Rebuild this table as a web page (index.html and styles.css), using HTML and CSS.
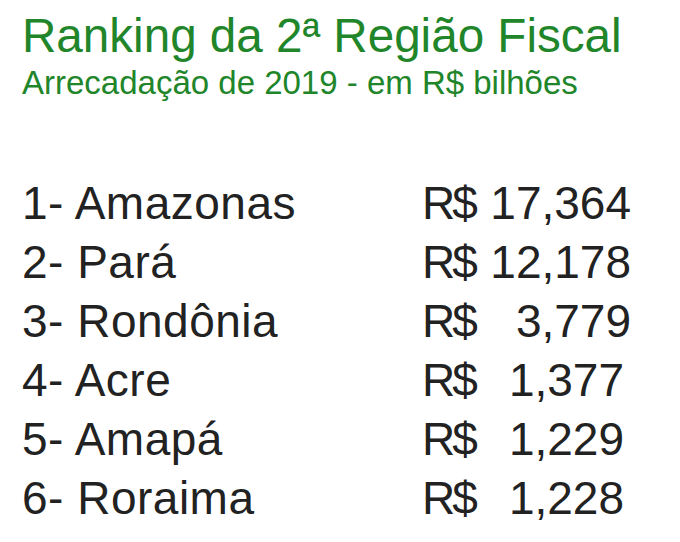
FILE: index.html
```html
<!DOCTYPE html>
<html lang="pt-BR">
<head>
<meta charset="utf-8">
<title>Ranking da 2ª Região Fiscal</title>
<link rel="stylesheet" href="styles.css">
</head>
<body>
<main class="page">
  <header class="head">
    <h1 class="title">Ranking da 2ª Região Fiscal</h1>
    <p class="subtitle">Arrecadação de 2019 - em R$ bilhões</p>
  </header>
  <ol class="ranking">
    <li class="row"><span class="name">1- Amazonas</span><span class="cur">R$</span><span class="num">17,364</span></li>
    <li class="row"><span class="name">2- Pará</span><span class="cur">R$</span><span class="num">12,178</span></li>
    <li class="row"><span class="name">3- Rondônia</span><span class="cur">R$</span><span class="num">3,779</span></li>
    <li class="row row-short"><span class="name">4- Acre</span><span class="cur">R$</span><span class="num">1,377</span></li>
    <li class="row row-short"><span class="name">5- Amapá</span><span class="cur">R$</span><span class="num">1,229</span></li>
    <li class="row row-short"><span class="name">6- Roraima</span><span class="cur">R$</span><span class="num">1,228</span></li>
  </ol>
</main>
</body>
</html>
```
FILE: styles.css
```css
html, body {
  margin: 0;
  padding: 0;
  background: #ffffff;
}

.page {
  font-family: "Liberation Sans", Arial, Helvetica, sans-serif;
  padding: 9px 0 0 22px;
  display: flex;
  flex-direction: column;
}

.head {
  display: flex;
  flex-direction: column;
  color: #21852a;
}

.title {
  margin: 0;
  font-weight: normal;
  font-size: 47.6px;
  line-height: 54px;
}

.subtitle {
  margin: 0;
  font-size: 33px;
  line-height: 40px;
}

.ranking {
  list-style: none;
  margin: 71px 0 0 0;
  padding: 0;
  display: flex;
  flex-direction: column;
  color: #222222;
  font-size: 46px;
}

.row {
  display: grid;
  grid-template-columns: 400px 60px 149px;
  line-height: 59px;
  height: 59px;
}

.name {
  letter-spacing: 0.5px;
}

.cur {
  letter-spacing: -3px;
}

.num {
  text-align: right;
}

.row-short .num {
  padding-right: 7px;
}
```
